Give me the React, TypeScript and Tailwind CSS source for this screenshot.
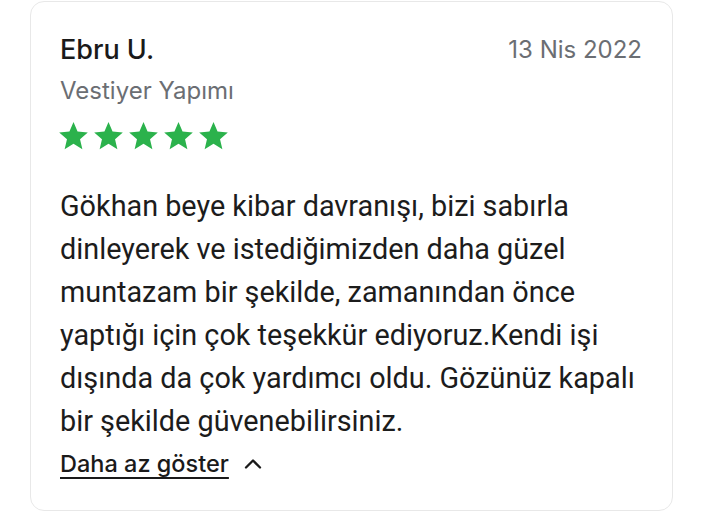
import { ChevronUp } from "lucide-react";

const review = {
  name: "Ebru U.",
  date: "13 Nis 2022",
  service: "Vestiyer Yapımı",
  rating: 5,
  text: "Gökhan beye kibar davranışı, bizi sabırla dinleyerek ve istediğimizden daha güzel muntazam bir şekilde, zamanından önce yaptığı için çok teşekkür ediyoruz.Kendi işi dışında da çok yardımcı oldu. Gözünüz kapalı bir şekilde güvenebilirsiniz.",
};

function Star() {
  return (
    <svg viewBox="0 0 24 24" className="w-[33px] h-[33px]" fill="#2bb24c">
      <path d="M12 2.2l2.95 6.9 7.45.65-5.65 4.9 1.7 7.3L12 18.05 5.55 21.95l1.7-7.3L1.6 9.75l7.45-.65z" />
    </svg>
  );
}

export default function App() {
  return (
    <div className="w-[702px] h-[512px] bg-white overflow-hidden">
      <div className="ml-[30px] mt-px w-[643px] h-[510px] border-[1.5px] border-[#e8e8e8] rounded-[14px] px-[29px] pt-[32px]">
        <div className="flex justify-between items-start">
          <div>
            <div className="text-[27px] leading-[31px] font-medium text-[#1a1a1a] font-['Inter',sans-serif]">
              {review.name}
            </div>
            <div className="mt-[12px] text-[24px] leading-[28px] text-[#6b6e73] font-['Inter',sans-serif]">
              {review.service}
            </div>
          </div>
          <div className="text-[24px] leading-[31px] text-[#6b6e73] font-['Inter',sans-serif] mr-[1px]">
            {review.date}
          </div>
        </div>

        <div className="flex gap-[2px] mt-[14px] -ml-[3px]">
          {Array.from({ length: review.rating }).map((_, i) => (
            <Star key={i} />
          ))}
        </div>

        <p className="mt-[33px] w-[590px] text-[28.8px] leading-[43px] text-[#1c1c1c] font-['Roboto',sans-serif]">
          {review.text}
        </p>

        <button className="mt-[6px] flex items-center gap-[10px] text-[#1a1a1a]">
          <span className="text-[23.5px] leading-[30px] font-medium underline underline-offset-[5px] decoration-[1.5px] font-['Inter',sans-serif]">
            Daha az göster
          </span>
          <ChevronUp className="w-[28px] h-[28px]" strokeWidth={2} />
        </button>
      </div>
    </div>
  );
}
